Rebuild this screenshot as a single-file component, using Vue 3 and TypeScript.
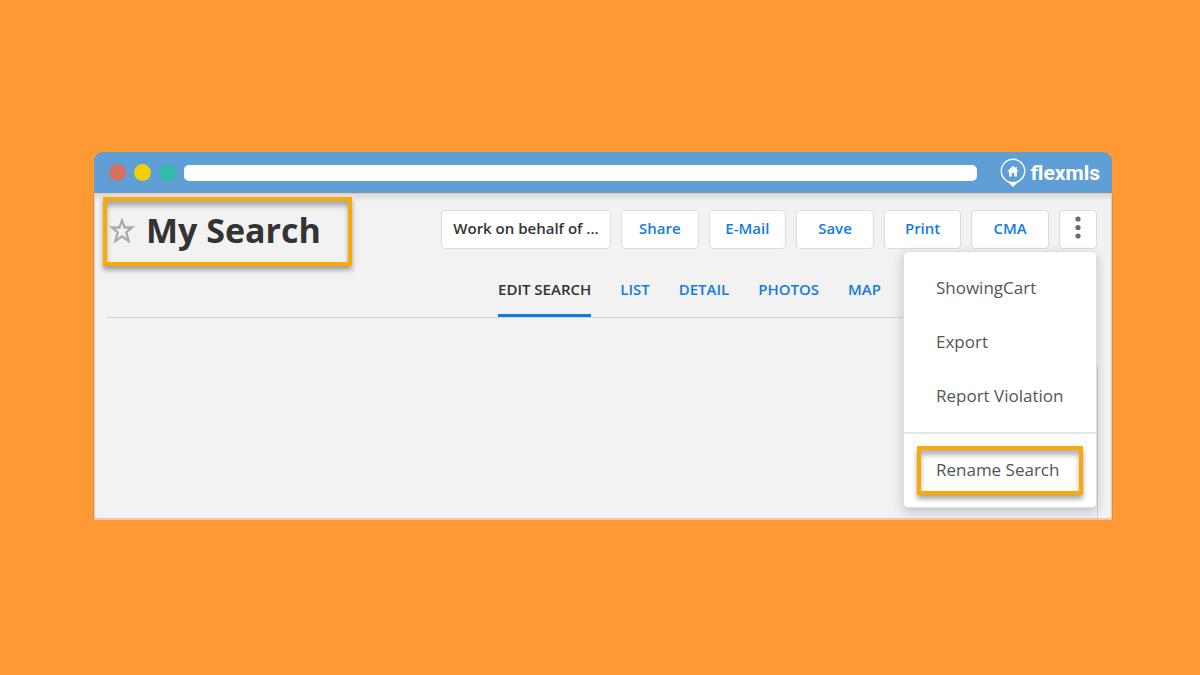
<script setup lang="ts">
import { ref } from 'vue'

const actions: string[] = ['Share', 'E-Mail', 'Save', 'Print', 'CMA']
const tabs: string[] = ['Edit Search', 'List', 'Detail', 'Photos', 'Map']
const menuItems: string[] = ['ShowingCart', 'Export', 'Report Violation']
const activeTab = ref<string>('Edit Search')
const menuOpen = ref<boolean>(true)
const address = ref<string>('')
</script>

<template>
  <main class="stage">
    <section class="window">
      <header class="chrome">
        <span class="dot red"></span>
        <span class="dot yellow"></span>
        <span class="dot green"></span>
        <input v-model="address" class="address" type="text" aria-label="Address" />
        <div class="logo">
          <svg class="pin" viewBox="0 0 26 30" aria-hidden="true">
            <path d="M7.500 23.500 13 29l5.500-5.500z" fill="#fff" />
            <circle cx="13" cy="13" r="11.700" fill="#609ed6" stroke="#fff" stroke-width="1.400" />
            <path d="M13 7.700 7.200 13.500h1.900v5h2.700v-3.500h2.400v3.500h2.700v-5h1.900l-1.800-1.800V9h-1.600v1.100z" fill="#fff" />
          </svg>
          <span class="brand">flexmls</span>
        </div>
      </header>

      <div class="page">
        <div class="toolbar">
          <div class="title highlight">
            <button class="star" type="button" aria-label="Add to favorites">
              <svg viewBox="0 0 26 26" aria-hidden="true">
                <path d="M13 3.500 15.600 10.500H23L17.200 15.300 19.700 24 13 19.300 6.300 24 8.800 15.300 3 10.500H10.400z" fill="none" stroke="#aaa" stroke-width="2.300" />
              </svg>
            </button>
            <h1>My Search</h1>
          </div>
          <div class="actions">
            <button class="btn behalf" type="button">Work on behalf of ...</button>
            <button v-for="action in actions" :key="action" class="btn action" type="button">{{ action }}</button>
            <div class="more">
              <button class="btn dots" type="button" aria-label="More options" :aria-expanded="menuOpen" @click="menuOpen = !menuOpen">
                <svg viewBox="0 0 6 24" aria-hidden="true">
                  <circle cx="3" cy="3" r="2.600" />
                  <circle cx="3" cy="11.500" r="2.600" />
                  <circle cx="3" cy="20" r="2.600" />
                </svg>
              </button>
              <div v-if="menuOpen" class="menu">
                <div class="group">
                  <button v-for="item in menuItems" :key="item" class="item" type="button">{{ item }}</button>
                </div>
                <div class="group last">
                  <button class="item rename highlight" type="button">Rename Search</button>
                </div>
              </div>
            </div>
          </div>
        </div>
        <nav class="tabs">
          <button
            v-for="tab in tabs"
            :key="tab"
            type="button"
            class="tab"
            :class="{ active: tab === activeTab }"
            @click="activeTab = tab"
          >{{ tab }}</button>
        </nav>
        <div class="content"></div>
      </div>
    </section>
  </main>
</template>

<style>
body {
  margin: 0;
  background: #ff9933;
}
</style>

<style scoped>
* {
  box-sizing: border-box;
}
button {
  margin: 0;
  padding: 0;
  border: 0;
  background: none;
  font: inherit;
  color: inherit;
  cursor: pointer;
}
.stage {
  padding: 152px 88px 0 94px;
  font-family: 'Open Sans', 'Noto Sans', sans-serif;
}
.window {
  border-radius: 9px 9px 0 0;
}
.chrome {
  display: flex;
  align-items: center;
  height: 41px;
  padding: 0 12px 0 15px;
  border-radius: 9px 9px 0 0;
  background: #609ed6;
}
.dot {
  width: 17px;
  height: 17px;
  margin-right: 8px;
  border-radius: 50%;
}
.red {
  background: #d57060;
}
.yellow {
  background: #f3ce00;
}
.green {
  background: #35bba9;
}
.address {
  flex: 1;
  min-width: 0;
  height: 16px;
  margin-right: 23px;
  padding: 0 8px;
  border: 0;
  border-radius: 5px;
  background: #fff;
}
.logo {
  display: flex;
  align-items: center;
  gap: 5px;
}
.pin {
  width: 26px;
  height: 30px;
}
.brand {
  color: #fff;
  font-family: Roboto, 'Open Sans', sans-serif;
  font-size: 21px;
  font-weight: 700;
  line-height: 24px;
}
.page {
  padding: 3px 14px 0 8px;
  border: solid #f5c6a0;
  border-width: 1px 1px 2px;
  background: #f2f2f2;
  box-shadow: inset 0 7px 6px -4px rgba(0, 0, 0, 0.12), 1px 2px 0 #c69559, -1px 0 0 #d69250;
}
.toolbar {
  display: flex;
  align-items: flex-start;
  justify-content: space-between;
}
.highlight {
  border: 4px solid #f8ab08;
  box-shadow: 0 4px 5px rgba(0, 0, 0, 0.35), inset 0 5px 5px rgba(0, 0, 0, 0.3);
}
.title {
  display: flex;
  align-items: center;
  gap: 11px;
  width: 249px;
  height: 69px;
  padding: 0 0 4px 2px;
}
.star,
.star svg {
  display: block;
  width: 26px;
  height: 26px;
}
h1 {
  margin: 0;
  color: #333;
  font-size: 34px;
  font-weight: 700;
  line-height: 40px;
}
.actions {
  display: flex;
  gap: 10px;
  width: 656px;
  padding-top: 13px;
}
.btn {
  height: 39px;
  padding-bottom: 3px;
  border: 1px solid #dcdcdc;
  border-radius: 4px;
  background: #fff;
  color: #147be0;
  font-size: 15px;
  font-weight: 600;
}
.behalf {
  flex: none;
  width: 170px;
  color: #333;
}
.action {
  flex: 1 1 0;
}
.more {
  position: relative;
}
.dots {
  display: flex;
  align-items: center;
  justify-content: center;
  width: 38px;
}
.dots svg {
  width: 6px;
  height: 24px;
  fill: #6b6b6b;
}
.menu {
  position: absolute;
  top: 41px;
  right: 0;
  z-index: 2;
  width: 194px;
  border: 1px solid #e0e0e0;
  border-radius: 5px;
  background: #fff;
  box-shadow: 0 4px 12px rgba(0, 0, 0, 0.2);
  color: #555;
  font-size: 17px;
}
.group {
  padding: 8px 0 10px;
}
.last {
  padding: 12px 13px;
  border-top: 2px solid #e6e6e6;
}
.item {
  display: block;
  width: 100%;
  height: 54px;
  padding: 0 32px;
  text-align: left;
  white-space: nowrap;
}
.rename {
  height: 49px;
  padding: 0 15px 2px;
}
.tabs {
  display: flex;
  justify-content: flex-end;
  gap: 29px;
  margin-left: 4px;
  padding-right: 216px;
  border-bottom: 1px solid #d2d2d2;
}
.tab {
  height: 51px;
  padding-bottom: 3px;
  border-bottom: 3px solid transparent;
  color: #147be0;
  font-size: 15px;
  font-weight: 600;
  text-transform: uppercase;
}
.active {
  border-color: #147be0;
  color: #333;
}
.content {
  height: 152px;
  margin: 48px -1px 0 0;
  border-right: 1px solid #d2d2d2;
}
</style>
